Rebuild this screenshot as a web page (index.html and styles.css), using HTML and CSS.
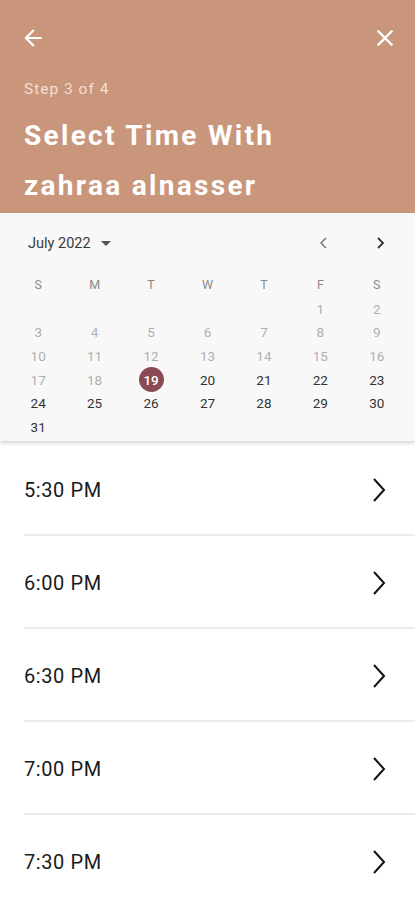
FILE: index.html
```html
<!DOCTYPE html>
<html lang="en">

<head>
    <meta charset="UTF-8" />
    <meta name="viewport" content="width=device-width, initial-scale=1.0" />
    <title>Select Time</title>
    <link rel="stylesheet" href="styles.css">
</head>

<body>
    <header class="top">
        <div class="top-bar">
            <button class="icon-btn" aria-label="Back">
                <svg width="26" height="26" viewBox="0 0 24 24"><path d="M20 11H7.83l5.59-5.59L12 4l-8 8 8 8 1.41-1.41L7.83 13H20v-2z" fill="#fff"/></svg>
            </button>
            <button class="icon-btn" aria-label="Close">
                <svg width="28" height="28" viewBox="0 0 24 24"><path d="M19 6.41L17.59 5 12 10.59 6.41 5 5 6.41 10.59 12 5 17.59 6.41 19 12 13.41 17.59 19 19 17.59 13.41 12z" fill="#fff"/></svg>
            </button>
        </div>
        <p class="step">Step 3 of 4</p>
        <h1>Select Time With<br>zahraa alnasser</h1>
    </header>

    <section class="calendar">
        <div class="cal-head">
            <div class="month">July 2022 <span class="caret"></span></div>
            <div class="nav">
                <svg width="12" height="14" viewBox="0 0 12 14"><path d="M8 2L3 7l5 5" fill="none" stroke="#777" stroke-width="1.5"/></svg>
                <svg width="12" height="14" viewBox="0 0 12 14"><path d="M4 2l5 5-5 5" fill="none" stroke="#333" stroke-width="1.8"/></svg>
            </div>
        </div>
        <div class="grid">
            <span class="wd">S</span><span class="wd">M</span><span class="wd">T</span><span class="wd">W</span><span class="wd">T</span><span class="wd">F</span><span class="wd">S</span>
            <span></span><span></span><span></span><span></span><span></span>
            <span class="off">1</span><span class="off">2</span>
            <span class="off">3</span><span class="off">4</span><span class="off">5</span><span class="off">6</span><span class="off">7</span><span class="off">8</span><span class="off">9</span>
            <span class="off">10</span><span class="off">11</span><span class="off">12</span><span class="off">13</span><span class="off">14</span><span class="off">15</span><span class="off">16</span>
            <span class="off">17</span><span class="off">18</span><span class="sel"><b>19</b></span><span>20</span><span>21</span><span>22</span><span>23</span>
            <span>24</span><span>25</span><span>26</span><span>27</span><span>28</span><span>29</span><span>30</span>
            <span>31</span>
        </div>
    </section>

    <ul class="times">
        <li>5:30 PM <svg class="chev" width="16" height="26" viewBox="0 0 16 26"><path d="M3 2l10 11L3 24" fill="none" stroke="#111" stroke-width="2"/></svg></li>
        <li>6:00 PM <svg class="chev" width="16" height="26" viewBox="0 0 16 26"><path d="M3 2l10 11L3 24" fill="none" stroke="#111" stroke-width="2"/></svg></li>
        <li>6:30 PM <svg class="chev" width="16" height="26" viewBox="0 0 16 26"><path d="M3 2l10 11L3 24" fill="none" stroke="#111" stroke-width="2"/></svg></li>
        <li>7:00 PM <svg class="chev" width="16" height="26" viewBox="0 0 16 26"><path d="M3 2l10 11L3 24" fill="none" stroke="#111" stroke-width="2"/></svg></li>
        <li>7:30 PM <svg class="chev" width="16" height="26" viewBox="0 0 16 26"><path d="M3 2l10 11L3 24" fill="none" stroke="#111" stroke-width="2"/></svg></li>
    </ul>
</body>

</html>
```

FILE: styles.css
```css
* {
    margin: 0;
    padding: 0;
    box-sizing: border-box;
}

body {
    font-family: Roboto, "Liberation Sans", sans-serif;
    background: #fff;
    color: #1e1e1e;
    width: 415px;
    overflow: hidden;
}

.top {
    background-color: #c9967b;
    color: #fff;
    padding: 24px 16px 2px 24px;
}

.top-bar {
    display: flex;
    justify-content: space-between;
    align-items: center;
    height: 28px;
    margin-left: -4px;
}

.icon-btn {
    background: none;
    border: none;
    display: flex;
}

.step {
    margin-top: 27px;
    font-size: 15.5px;
    line-height: 20px;
    color: #f3dfd3;
    letter-spacing: 1px;
}

h1 {
    margin-top: 12px;
    font-size: 28px;
    line-height: 50px;
    font-weight: 700;
    letter-spacing: 2.3px;
}

.calendar {
    background-color: #f8f8f8;
    padding: 15px 10px 0;
    height: 228px;
    box-shadow: 0 2px 4px rgba(0, 0, 0, 0.18);
    position: relative;
}

.cal-head {
    display: flex;
    justify-content: space-between;
    align-items: center;
    height: 30px;
    padding: 0 19px 0 18px;
}

.month {
    font-size: 14.5px;
    color: #3a3a3a;
    display: flex;
    align-items: center;
    gap: 10px;
}

.caret {
    border-left: 5px solid transparent;
    border-right: 5px solid transparent;
    border-top: 5px solid #555;
}

.nav {
    display: flex;
    gap: 44px;
}

.grid {
    margin-top: 15px;
    display: grid;
    grid-template-columns: repeat(7, 1fr);
    grid-auto-rows: 23.7px;
    font-size: 13.5px;
    color: #333;
}

.grid span {
    display: flex;
    align-items: center;
    justify-content: center;
}

.grid .wd {
    color: #8a8a8a;
    font-size: 12.5px;
}

.grid .off {
    color: #b0b0b0;
}

.grid .sel b {
    width: 25px;
    height: 25px;
    border-radius: 50%;
    background-color: #8c4a55;
    color: #fff;
    font-weight: 500;
    display: flex;
    align-items: center;
    justify-content: center;
}

.times {
    list-style: none;
    padding-top: 2px;
}

.times li {
    height: 93px;
    margin-left: 24px;
    padding-right: 28px;
    border-bottom: 2px solid #ececec;
    display: flex;
    align-items: center;
    justify-content: space-between;
    font-size: 20px;
    letter-spacing: 0.6px;
    color: #1a1a1a;
    padding-top: 3px;
}
```
